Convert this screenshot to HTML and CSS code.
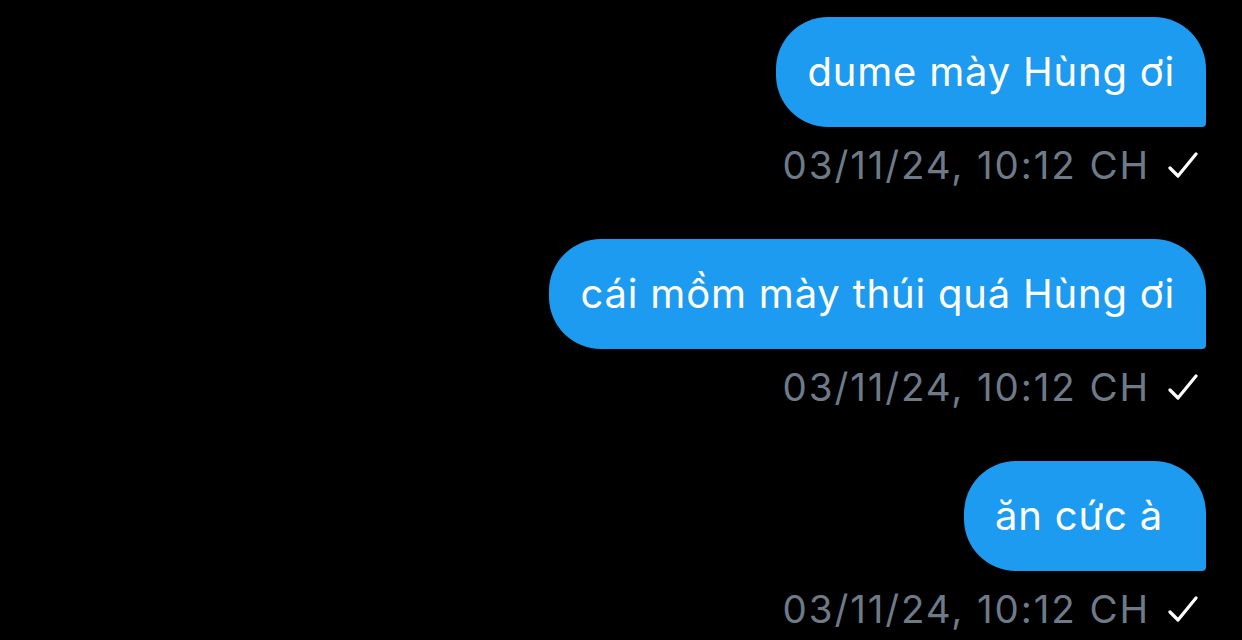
FILE: index.html
```html
<!DOCTYPE html>
<html lang="vi">
<head>
    <meta charset="UTF-8">
    <title>Tin nhắn</title>
    <link rel="stylesheet" href="styles.css">
</head>
<body>
    <div class="thread">
        <div class="message">
            <div class="bubble">dume mày Hùng ơi</div>
            <div class="meta">
                <span class="time">03/11/24, 10:12 CH</span>
                <svg class="check" viewBox="0 0 30 26" width="30" height="26"><path d="M2 16 L10 24 L28 2" fill="none" stroke="#fff" stroke-width="3.2" stroke-linecap="round" stroke-linejoin="round"/></svg>
            </div>
        </div>
        <div class="message">
            <div class="bubble">cái mồm mày thúi quá Hùng ơi</div>
            <div class="meta">
                <span class="time">03/11/24, 10:12 CH</span>
                <svg class="check" viewBox="0 0 30 26" width="30" height="26"><path d="M2 16 L10 24 L28 2" fill="none" stroke="#fff" stroke-width="3.2" stroke-linecap="round" stroke-linejoin="round"/></svg>
            </div>
        </div>
        <div class="message">
            <div class="bubble">ăn cức à&nbsp;</div>
            <div class="meta">
                <span class="time">03/11/24, 10:12 CH</span>
                <svg class="check" viewBox="0 0 30 26" width="30" height="26"><path d="M2 16 L10 24 L28 2" fill="none" stroke="#fff" stroke-width="3.2" stroke-linecap="round" stroke-linejoin="round"/></svg>
            </div>
        </div>
    </div>
</body>
</html>
```

FILE: styles.css
```css
body {
    margin: 0;
    background: #000;
    font-family: Inter, "Noto Sans", sans-serif;
    color: #fff;
}
.thread {
    display: flex;
    flex-direction: column;
    align-items: flex-end;
    padding: 17px 36px 0 0;
    gap: 36px;
}
.message {
    display: flex;
    flex-direction: column;
    align-items: flex-end;
}
.bubble {
    background: #1d9bf0;
    height: 110px;
    line-height: 110px;
    padding: 0 31px;
    border-radius: 52px 52px 4px 52px;
    font-size: 40px;
    letter-spacing: 0.8px;
    white-space: nowrap;
}
.meta {
    display: flex;
    align-items: center;
    gap: 18px;
    height: 76px;
    padding-right: 8px;
}
.time {
    color: #6e7a87;
    font-size: 38.5px;
    letter-spacing: 1.9px;
}
.check {
    display: block;
}
```
